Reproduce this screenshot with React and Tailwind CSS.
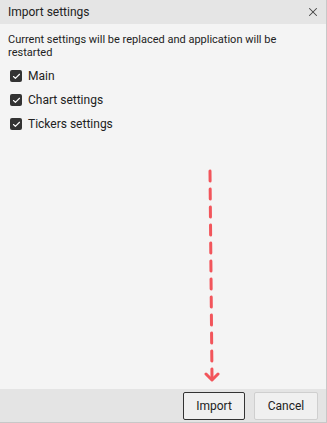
import { Check, X } from 'lucide-react';

const items = ['Main', 'Chart settings', 'Tickers settings'];

const App = () => {
    return (
        <div className="w-[327px] h-[423px] flex flex-col bg-[#f4f4f4] border-r border-b border-[#c8c8c8] font-['Roboto',sans-serif] text-[#222]">
            <div className="h-[24px] flex items-center justify-between bg-[#e5e5e5] pl-2 pr-[6px]">
                <span className="text-[12px] text-[#222]">Import settings</span>
                <X size={14} strokeWidth={1.75} className="text-[#444]" />
            </div>

            <div className="flex-1 flex flex-col relative px-2 pt-[9px]">
                <p className="text-[11px] leading-[13px] text-[#222] pr-10">
                    Current settings will be replaced and application will be restarted
                </p>
                <div className="flex flex-col mt-[10px] gap-[10px] pl-[2px]">
                    {items.map((label) => (
                        <label key={label} className="flex items-center gap-[6px] h-[14px]">
                            <span className="w-[12px] h-[12px] rounded-[2px] bg-[#333] flex items-center justify-center">
                                <Check size={9} strokeWidth={3} className="text-white" />
                            </span>
                            <span className="text-[12px] text-[#222]">{label}</span>
                        </label>
                    ))}
                </div>

                {/* annotation arrow */}
                <svg className="absolute left-[202px] top-[144px]" width="18" height="216" viewBox="0 0 18 216">
                    <path d="M8 3 L10 210" stroke="#f2555b" strokeWidth="3" strokeLinecap="round" strokeDasharray="10 8" fill="none" />
                    <path d="M4 206 L10 212 L16 206" stroke="#f2555b" strokeWidth="3" strokeLinecap="round" strokeLinejoin="round" fill="none" />
                </svg>
            </div>

            <div className="h-[33px] flex items-center justify-end gap-[9px] bg-[#e4e4e4] pr-[8px]">
                <button className="h-[28px] w-[62px] rounded-[2px] border border-[#333] bg-[#f0f0f0] text-[12px] text-[#222]">
                    Import
                </button>
                <button className="h-[28px] w-[64px] rounded-[2px] border border-[#cfcfcf] bg-[#f0f0f0] text-[12px] text-[#222]">
                    Cancel
                </button>
            </div>
        </div>
    );
};

export default App;
